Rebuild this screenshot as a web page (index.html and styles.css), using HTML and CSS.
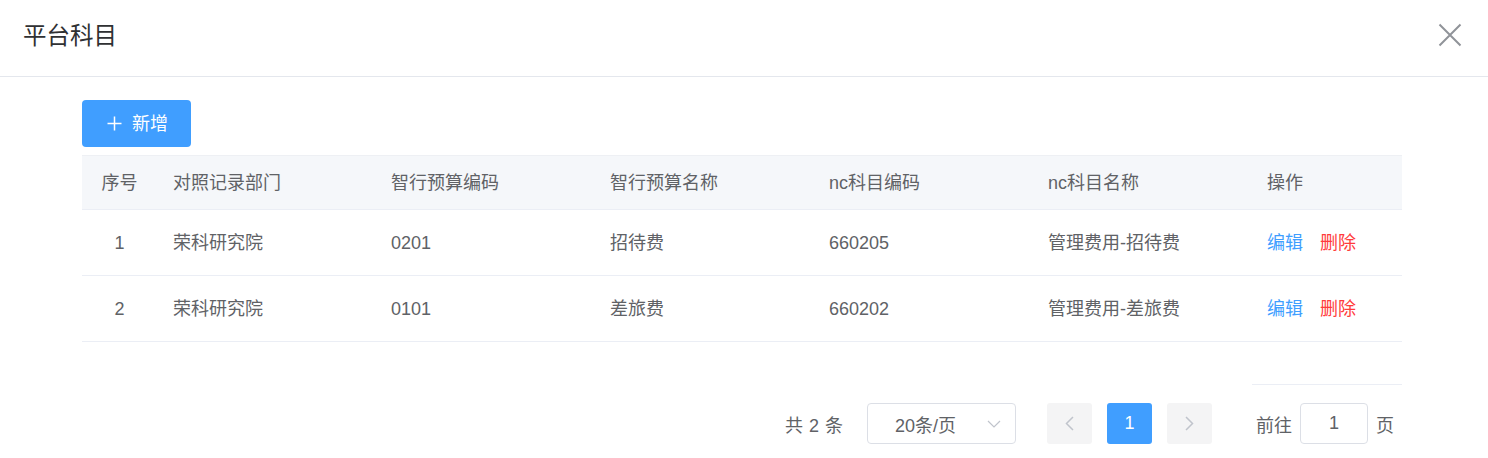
FILE: index.html
```html
<!DOCTYPE html>
<html lang="zh">
<head>
<meta charset="utf-8">
<title>平台科目</title>
<link rel="stylesheet" href="styles.css">
</head>
<body>
<div class="dialog">
  <div class="dialog-header">
    <span class="dialog-title">平台科目</span>
    <span class="close">
      <svg width="24" height="24" viewBox="0 0 24 24"><path d="M1.5 1.5 L22.5 22.5 M22.5 1.5 L1.5 22.5" stroke="#909399" stroke-width="2" fill="none"/></svg>
    </span>
  </div>
  <div class="dialog-body">
    <button class="btn-add">
      <svg width="15" height="15" viewBox="0 0 15 15"><path d="M7.5 0.5 V14.5 M0.5 7.5 H14.5" stroke="#fff" stroke-width="1.5" fill="none"/></svg>
      <span>新增</span>
    </button>
    <div class="table">
      <div class="row head">
        <div class="cell center">序号</div>
        <div class="cell">对照记录部门</div>
        <div class="cell">智行预算编码</div>
        <div class="cell">智行预算名称</div>
        <div class="cell">nc科目编码</div>
        <div class="cell">nc科目名称</div>
        <div class="cell">操作</div>
      </div>
      <div class="row">
        <div class="cell center">1</div>
        <div class="cell">荣科研究院</div>
        <div class="cell">0201</div>
        <div class="cell">招待费</div>
        <div class="cell">660205</div>
        <div class="cell">管理费用-招待费</div>
        <div class="cell ops"><span class="link-edit">编辑</span><span class="link-del">删除</span></div>
      </div>
      <div class="row">
        <div class="cell center">2</div>
        <div class="cell">荣科研究院</div>
        <div class="cell">0101</div>
        <div class="cell">差旅费</div>
        <div class="cell">660202</div>
        <div class="cell">管理费用-差旅费</div>
        <div class="cell ops"><span class="link-edit">编辑</span><span class="link-del">删除</span></div>
      </div>
    </div>
    <div class="fixed-line-wrap"><div class="fixed-line"></div></div>
    <div class="pagination">
      <span class="total">共 2 条</span>
      <div class="sizes">
        <span>20条/页</span>
        <svg class="arrow-down" width="14" height="8" viewBox="0 0 14 8"><path d="M1 1 L7 7 L13 1" stroke="#c0c4cc" stroke-width="1.2" fill="none"/></svg>
      </div>
      <span class="pg-btn prev"><svg width="9" height="15" viewBox="0 0 9 15"><path d="M8 1 L1.5 7.5 L8 14" stroke="#c0c4cc" stroke-width="1.5" fill="none"/></svg></span>
      <span class="pg-num active">1</span>
      <span class="pg-btn next"><svg width="9" height="15" viewBox="0 0 9 15"><path d="M1 1 L7.5 7.5 L1 14" stroke="#c0c4cc" stroke-width="1.5" fill="none"/></svg></span>
      <span class="jump">前往<span class="jump-input">1</span>页</span>
    </div>
  </div>
</div>
</body>
</html>
```

FILE: styles.css
```css
* { box-sizing: border-box; }
html, body {
  margin: 0;
  padding: 0;
  background: #fff;
  font-family: "Liberation Sans", "Noto Sans CJK SC", sans-serif;
  color: #606266;
}
.dialog-header {
  height: 77px;
  border-bottom: 1px solid #e4e7ed;
  display: flex;
  align-items: center;
  justify-content: space-between;
  padding: 0 26px 5px 23px;
}
.dialog-title {
  font-size: 23.5px;
  color: #303133;
  line-height: 32px;
}
.close {
  display: flex;
  width: 24px;
  height: 24px;
  margin-top: -2px;
}
.dialog-body {
  padding: 23px 86px 0 82px;
}
.btn-add {
  display: flex;
  align-items: center;
  height: 47px;
  padding: 0 23px 0 25px;
  background: #409eff;
  border: none;
  border-radius: 4px;
  color: #fff;
  font-family: inherit;
  font-size: 18px;
  gap: 10px;
  margin-bottom: 8px;
}
.btn-add span { line-height: 1; }
.table {
  width: 1320px;
  font-size: 18px;
}
.row {
  display: grid;
  grid-template-columns: 75px 218px 219px 219px 219px 219px 151px;
  height: 66px;
  border-bottom: 1px solid #ebeef5;
  align-items: center;
}
.row.head {
  height: 55px;
  background: #f5f7fa;
  border-top: 1px solid #eef0f4;
}
.cell {
  padding-left: 16px;
  white-space: nowrap;
  line-height: 24px;
}
.cell.center {
  padding-left: 0;
  text-align: center;
}
.link-edit { color: #409eff; }
.link-del { color: #ff3b3b; margin-left: 17px; }
.fixed-line-wrap {
  width: 1320px;
  display: flex;
  justify-content: flex-end;
  margin-top: 42px;
}
.fixed-line {
  width: 150px;
  height: 1px;
  background: #ebeef5;
}
.pagination {
  width: 1320px;
  display: flex;
  justify-content: flex-end;
  align-items: center;
  margin-top: 18px;
  font-size: 18px;
  padding-right: 8px;
}
.total { margin-right: 24px; word-spacing: 1px; }
.sizes {
  width: 149px;
  height: 41px;
  border: 1px solid #dcdfe6;
  border-radius: 4px;
  display: flex;
  align-items: center;
  justify-content: space-between;
  padding: 0 14px 0 27px;
  margin-right: 31px;
}
.pg-btn, .pg-num {
  width: 45px;
  height: 41px;
  border-radius: 3px;
  background: #f4f4f5;
  display: flex;
  align-items: center;
  justify-content: center;
}
.pg-num.active {
  background: #409eff;
  color: #fff;
  margin: 0 15px;
}
.jump {
  margin-left: 44px;
  display: flex;
  align-items: center;
}
.jump-input {
  width: 68px;
  height: 41px;
  border: 1px solid #dcdfe6;
  border-radius: 4px;
  display: flex;
  align-items: center;
  justify-content: center;
  margin: 0 8px;
}
```
